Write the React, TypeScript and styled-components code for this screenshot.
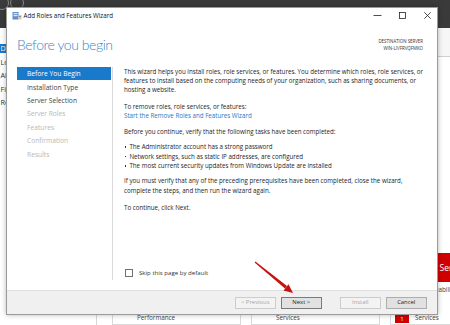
import React from 'react'
import styled, { createGlobalStyle } from 'styled-components'

const UI = `"Open Sans", "Noto Sans", "Liberation Sans", sans-serif`

const GlobalStyle = createGlobalStyle`
  html, body {
    margin: 0;
    padding: 0;
  }
  body {
    width: 450px;
    height: 325px;
    overflow: hidden;
    background: #ffffff;
    font-family: ${UI};
    color: #1e1e1e;
  }
`;

const sideItems = ['Dashboard', 'Local Server', 'All Servers', 'File and Storage Services', 'Remote Desktop Services']

const steps = [
  { label: 'Before You Begin', state: 'active' },
  { label: 'Installation Type', state: 'normal' },
  { label: 'Server Selection', state: 'normal' },
  { label: 'Server Roles', state: 'disabled' },
  { label: 'Features', state: 'disabled' },
  { label: 'Confirmation', state: 'disabled' },
  { label: 'Results', state: 'disabled' },
]

const tiles = [
  { title: 'File and Storage', rows: ['Manageability', 'Events', 'Performance'], badge: -1 },
  { title: 'IIS', rows: ['Manageability', 'Events', 'Services'], badge: -1 },
  { title: 'Local Server', rows: ['Manageability', 'Events', 'Services'], badge: 2 },
]

const App = () => {
  return (
    <Desktop>
      <GlobalStyle />
      <TopBar>
        <NavCircle />
        <NavCircle />
      </TopBar>

      <Workspace>
        <SideNav>
          {sideItems.map((s, i) => (
            <SideItem key={s} $active={i === 0}>{s}</SideItem>
          ))}
        </SideNav>
        <Main>
          <MainHeader />
          <TileSection>
            {tiles.map((t) => (
              <Tile key={t.title}>
                <TileHead>
                  <TileCount>1</TileCount>
                  {t.title}
                </TileHead>
                {t.rows.map((r, i) => (
                  <TileRow key={r}>
                    {i === t.badge ? <Badge>1</Badge> : <BadgeSlot />}
                    {r}
                  </TileRow>
                ))}
              </Tile>
            ))}
          </TileSection>
        </Main>
      </Workspace>

      <Dialog>
        <TitleBar>
          <svg width="10" height="9" viewBox="0 0 10 9">
            <rect x="0.5" y="1" width="6" height="7.5" fill="#5b8fc9" />
            <rect x="1.5" y="2.2" width="4" height="1" fill="#ffffff" />
            <rect x="1.5" y="4.2" width="4" height="1" fill="#ffffff" />
            <rect x="6" y="4" width="3.5" height="4.5" fill="#c9c9c9" />
            <rect x="6.6" y="5" width="2.3" height="0.8" fill="#7d7d7d" />
          </svg>
          <WindowTitle>Add Roles and Features Wizard</WindowTitle>
          <Controls>
            <ControlButton>
              <svg width="9" height="9" viewBox="0 0 9 9">
                <line x1="0.5" y1="4.5" x2="8.5" y2="4.5" stroke="#222" strokeWidth="0.8" />
              </svg>
            </ControlButton>
            <ControlButton>
              <svg width="9" height="9" viewBox="0 0 9 9">
                <rect x="1.5" y="1.5" width="6" height="6" fill="none" stroke="#222" strokeWidth="0.8" />
              </svg>
            </ControlButton>
            <ControlButton>
              <svg width="9" height="9" viewBox="0 0 9 9">
                <path d="M1.3 1.3 L7.7 7.7 M7.7 1.3 L1.3 7.7" stroke="#222" strokeWidth="0.8" />
              </svg>
            </ControlButton>
          </Controls>
        </TitleBar>

        <WizardHeader>
          <Heading>Before you begin</Heading>
          <Destination>
            DESTINATION SERVER
            <br />
            WIN-LIVFRVQFMKO
          </Destination>
        </WizardHeader>

        <WizardBody>
          <StepList>
            {steps.map((s) => (
              <Step key={s.label} $state={s.state}>{s.label}</Step>
            ))}
          </StepList>

          <Content>
            <Para>
              This wizard helps you install roles, role services, or features. You determine which roles, role services, or
              <br />
              features to install based on the computing needs of your organization, such as sharing documents, or
              <br />
              hosting a website.
            </Para>
            <Para $space={7.3}>
              To remove roles, role services, or features:
              <br />
              <Link>Start the Remove Roles and Features Wizard</Link>
            </Para>
            <Para $space={7.1}>Before you continue, verify that the following tasks have been completed:</Para>
            <Bullets>
              <Bullet>The Administrator account has a strong password</Bullet>
              <Bullet>Network settings, such as static IP addresses, are configured</Bullet>
              <Bullet>The most current security updates from Windows Update are installed</Bullet>
            </Bullets>
            <Para $space={5.5}>
              If you must verify that any of the preceding prerequisites have been completed, close the wizard,
              <br />
              complete the steps, and then run the wizard again.
            </Para>
            <Para $space={8.6}>To continue, click Next.</Para>

            <SkipRow>
              <CheckBox />
              Skip this page by default
            </SkipRow>
          </Content>
        </WizardBody>

        <Footer>
          <WizardButton disabled>&lt; Previous</WizardButton>
          <WizardButton $primary>Next &gt;</WizardButton>
          <WizardButton disabled $gap={17.5}>Install</WizardButton>
          <WizardButton>Cancel</WizardButton>
        </Footer>
      </Dialog>

      <Arrow width="50" height="42" viewBox="0 0 50 42">
        <polygon points="4.6,6.5 5.4,5.5 37,30.1 35,32.5" fill="#c8100f" />
        <polygon points="43,37 33.5,34.4 38.5,28.2" fill="#c8100f" />
      </Arrow>
    </Desktop>
  );
}

export default App

const Desktop = styled.div`
  position: relative;
  width: 450px;
  height: 325px;
  overflow: hidden;
  background: #ffffff;
`;

const TopBar = styled.div`
  height: 28px;
  background: #3a3a3a;
  display: flex;
  gap: 1px;
  margin-left: -5px;
`;

const NavCircle = styled.div`
  width: 12px;
  height: 12px;
  margin-top: -4px;
  border-radius: 50%;
  border: 1px solid #8a8a8a;
`;

const Workspace = styled.div`
  display: flex;
  height: 297px;
`;

const SideNav = styled.div`
  width: 97px;
  flex: none;
  box-sizing: border-box;
  border-right: 1px solid #d8d8d8;
  padding-top: 13.5px;
  background: #ffffff;
`;

const SideItem = styled.div<{ $active?: boolean }>`
  height: 13.5px;
  display: flex;
  align-items: center;
  font-size: 7.2px;
  padding-left: 0.5px;
  white-space: nowrap;
  overflow: hidden;
  color: ${(p) => (p.$active ? '#ffffff' : '#333333')};
  background: ${(p) => (p.$active ? 'linear-gradient(#ffffff 0 1.5px, #1979ca 1.5px 11.5px, #ffffff 11.5px)' : 'transparent')};
`;

const Main = styled.div`
  flex: 1;
  display: flex;
  flex-direction: column;
`;

const MainHeader = styled.div`
  height: 33px;
  background: #f6f6f6;
  border-bottom: 1px solid #cfcfcf;
`;

const TileSection = styled.div`
  display: flex;
  gap: 10px;
  padding: 196px 0 0 15px;
`;

const Tile = styled.div`
  flex: none;
  width: 129px;
  box-sizing: border-box;
  border: 1px solid #dadada;
  border-top: none;
`;

const TileHead = styled.div`
  height: 29px;
  background: #d10000;
  color: #ffffff;
  font-size: 8.5px;
  display: flex;
  align-items: center;
  gap: 15px;
  padding-left: 6px;
  white-space: nowrap;
  overflow: hidden;
`;

const TileCount = styled.span`
  font-size: 8.5px;
`;

const TileRow = styled.div`
  height: 14px;
  display: flex;
  align-items: center;
  gap: 6px;
  padding-left: 4px;
  font-size: 6.3px;
  color: #444444;
`;

const Badge = styled.span`
  width: 14px;
  height: 9px;
  margin-top: 3px;
  background: #d10000;
  color: #ffffff;
  font-size: 6px;
  display: flex;
  justify-content: center;
  align-items: center;
`;

const BadgeSlot = styled.span`
  width: 14px;
`;

const Dialog = styled.div`
  position: absolute;
  left: 6px;
  top: 7px;
  width: 432px;
  height: 308px;
  box-sizing: border-box;
  border: 1px solid #9a9a9a;
  background: #ffffff;
  box-shadow: 0 0 5px rgba(0, 0, 0, 0.28);
  display: flex;
  flex-direction: column;
`;

const TitleBar = styled.div`
  height: 15px;
  flex: none;
  display: flex;
  align-items: center;
  padding-left: 5px;
`;

const WindowTitle = styled.span`
  margin-left: 1.5px;
  font-size: 6.2px;
  color: #111111;
`;

const Controls = styled.div`
  margin-left: auto;
  display: flex;
  gap: 9px;
  padding-right: 2px;
`;

const ControlButton = styled.div`
  width: 16px;
  height: 15px;
  display: flex;
  align-items: center;
  justify-content: center;
`;

const WizardHeader = styled.div`
  height: 44px;
  flex: none;
  box-sizing: border-box;
  display: flex;
  justify-content: space-between;
  padding: 12px 14px 0 10px;
`;

const Heading = styled.h1`
  margin: 0;
  font-family: Lato, ${UI};
  font-size: 14px;
  line-height: 20px;
  letter-spacing: -0.45px;
  font-weight: 300;
  color: #3a86c8;
`;

const Destination = styled.div`
  margin-top: 3px;
  text-align: right;
  font-size: 4.4px;
  line-height: 7px;
  color: #333333;
`;

const WizardBody = styled.div`
  flex: 1;
  display: flex;
  min-height: 0;
`;

const StepList = styled.div`
  width: 96px;
  flex: none;
  margin-left: 10px;
  box-sizing: border-box;
  border-right: 1px solid #dadada;
`;

const Step = styled.div<{ $state: string }>`
  height: 13.4px;
  margin-right: 1px;
  display: flex;
  align-items: center;
  padding-left: 10px;
  font-size: 6.7px;
  white-space: nowrap;
  background: ${(p) => (p.$state === 'active' ? '#1979ca' : 'transparent')};
  color: ${(p) => (p.$state === 'active' ? '#ffffff' : p.$state === 'disabled' ? '#b8b8b8' : '#444444')};
`;

const Content = styled.div`
  flex: 1;
  display: flex;
  flex-direction: column;
  padding: 0 8px 0 11px;
  font-size: 6.2px;
  line-height: 9.2px;
  white-space: nowrap;
  color: #1e1e1e;
`;

const Para = styled.p<{ $space?: number }>`
  margin: ${(p) => p.$space ?? 0}px 0 0;
`;

const Link = styled.span`
  color: #1f77bd;
`;

const Bullets = styled.ul`
  margin: 5.5px 0 0;
  padding: 0;
  list-style: none;
  line-height: 9.6px;
`;

const Bullet = styled.li`
  display: flex;
  align-items: center;
  &::before {
    content: '';
    width: 1.6px;
    height: 1.6px;
    margin: 0 3px 0 0.8px;
    background: #333333;
  }
`;

const SkipRow = styled.label`
  margin-top: auto;
  margin-bottom: 2px;
  height: 10px;
  display: flex;
  align-items: center;
  gap: 6px;
  padding-left: 1px;
  font-size: 6.1px;
  color: #333333;
`;

const CheckBox = styled.span`
  width: 6px;
  height: 6px;
  border: 1px solid #707070;
  background: #ffffff;
`;

const Footer = styled.div`
  height: 24px;
  margin-top: 10px;
  flex: none;
  box-sizing: border-box;
  border-top: 1px solid #dfdfdf;
  background: #f0f0f0;
  display: flex;
  justify-content: flex-end;
  align-items: flex-start;
  gap: 4.5px;
  padding: 6px 10px 0 0;
`;

const WizardButton = styled.button<{ $primary?: boolean; $gap?: number }>`
  width: 41.5px;
  height: 11.5px;
  margin: 0 0 0 ${(p) => (p.$gap ? p.$gap - 4.5 : 0)}px;
  padding: 0;
  box-sizing: border-box;
  font-family: ${UI};
  font-size: 5.9px;
  line-height: 1;
  color: #1e1e1e;
  background: #e1e1e1;
  border: 1px solid ${(p) => (p.$primary ? '#7a7a7a' : '#adadad')};
  &:disabled {
    color: #a8a8a8;
    background: #f3f3f3;
    border-color: #cccccc;
  }
`;

const Arrow = styled.svg`
  position: absolute;
  left: 250px;
  top: 256px;
  pointer-events: none;
`;
